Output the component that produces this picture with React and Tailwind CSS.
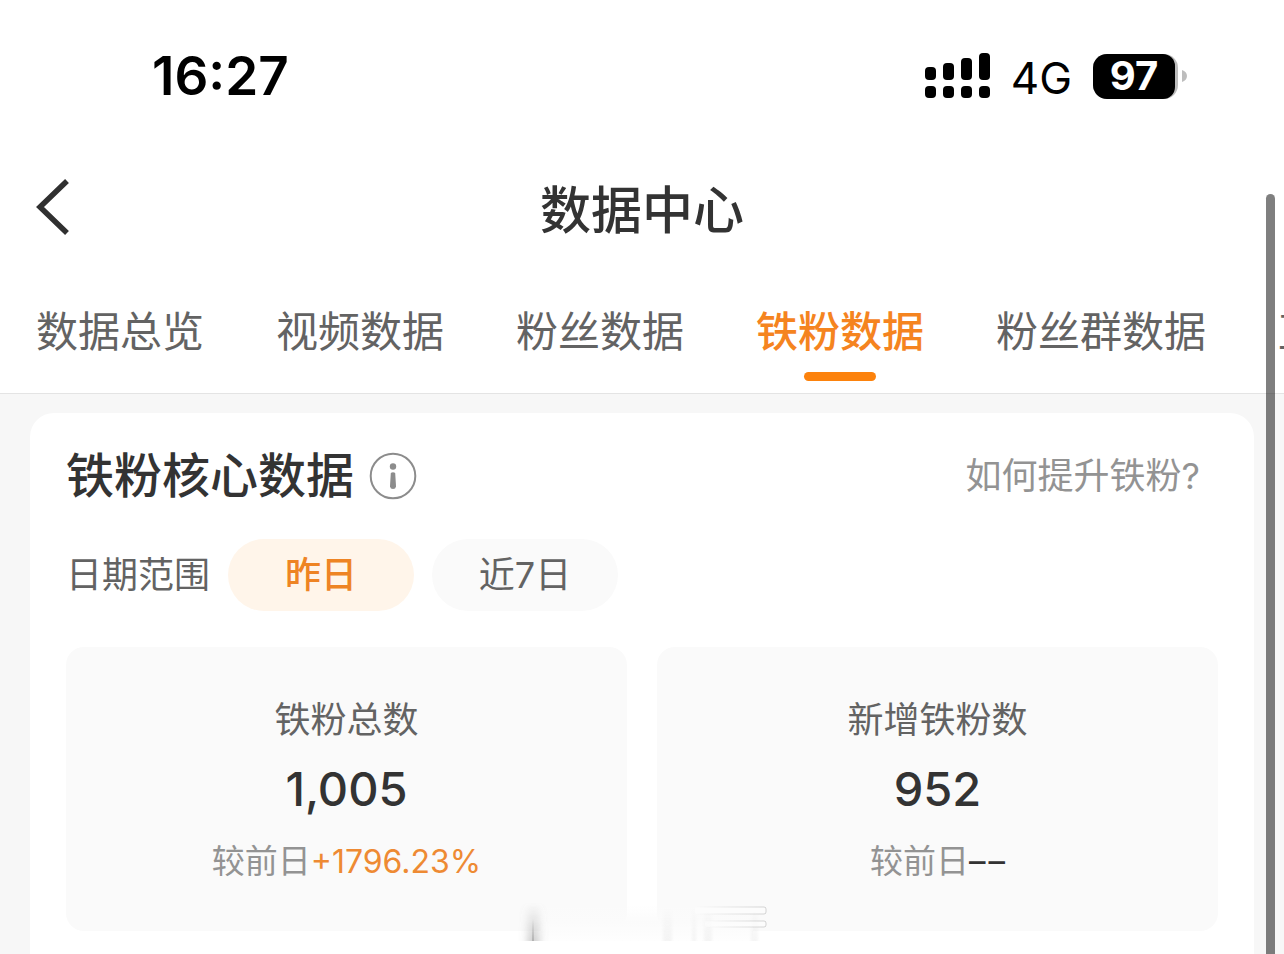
import React from "react";

const tabs = ["数据总览", "视频数据", "粉丝数据", "铁粉数据", "粉丝群数据", "直播数据"];
const activeTab = "铁粉数据";

function SignalIcon() {
  return (
    <svg width="66" height="46" viewBox="0 0 66 46" className="shrink-0" aria-hidden="true">
      <rect x="0" y="14" width="11" height="13" rx="4" />
      <rect x="18" y="10" width="11" height="17" rx="4" />
      <rect x="36" y="5" width="11" height="22" rx="4" />
      <rect x="54" y="0" width="11" height="27" rx="4" />
      <rect x="0" y="33" width="11" height="12" rx="4" />
      <rect x="18" y="33" width="11" height="12" rx="4" />
      <rect x="36" y="33" width="11" height="12" rx="4" />
      <rect x="54" y="33" width="11" height="12" rx="4" />
    </svg>
  );
}

function StatusBar() {
  return (
    <div className="flex h-[152px] items-center justify-between pr-[96px] pl-[152px] text-black">
      <time className="text-[53px] leading-[64px] font-semibold">16:27</time>
      <div className="flex items-center">
        <SignalIcon />
        <span className="ml-[20px] pt-[4px] text-[44px] leading-[54px]">4G</span>
        <div className="ml-[21px] flex items-center">
          <div className="rounded-[14px] bg-[#bdbdbd] pr-[3px]">
            <div className="flex h-[45px] w-[82px] items-center justify-center rounded-l-[14px] rounded-r-[12px] bg-black text-[40px] leading-[48px] font-bold text-white">
              97
            </div>
          </div>
          <svg width="10" height="14" viewBox="0 0 10 14" aria-hidden="true">
            <path d="M4 1C7 2 9 4 9 7s-2 5-5 6z" fill="#bdbdbd" />
          </svg>
        </div>
      </div>
    </div>
  );
}

function TitleBar() {
  return (
    <header className="grid h-[114px] grid-cols-[1fr_auto_1fr] items-center px-[36px]">
      <button type="button" aria-label="返回" className="justify-self-start pb-[4px]">
        <svg width="34" height="58" viewBox="0 0 34 58" fill="none" stroke="#303030" strokeWidth="5.5" aria-hidden="true">
          <path d="M31 3L4 29l27 26" />
        </svg>
      </button>
      <h1 className="pt-[4px] text-[51px] leading-[60px] font-medium text-[#333333]">数据中心</h1>
    </header>
  );
}

function Tabs() {
  return (
    <nav className="flex h-[128px] gap-[72px] overflow-hidden border-b border-[#e4e4e4] pt-[36px] pl-[36px]">
      {tabs.map((tab) => (
        <button
          key={tab}
          type="button"
          aria-current={tab === activeTab ? "page" : undefined}
          className={
            "flex shrink-0 flex-col items-center gap-[10px] text-[42px] leading-[60px] whitespace-nowrap " +
            (tab === activeTab ? "font-medium text-[#f5841f]" : "text-[#636363]")
          }
        >
          {tab}
          {tab === activeTab && <span className="h-[9px] w-[72px] rounded-full bg-[#fc820c]" />}
        </button>
      ))}
    </nav>
  );
}

function StatCard({ label, value, children }) {
  return (
    <section className="flex flex-col items-center rounded-[18px] bg-[#fafafa] pt-[46px] pb-[45px] text-center">
      <h3 className="text-[36px] leading-[54px] text-[#636363]">{label}</h3>
      <p className="mt-[12px] text-[47px] leading-[60px] font-medium text-[#333333]">{value}</p>
      <p className="mt-[18px] text-[33px] leading-[49px] text-[#939393]">较前日{children}</p>
    </section>
  );
}

function Smudge() {
  return (
    <svg
      width="260"
      height="46"
      viewBox="0 0 260 46"
      className="pointer-events-none absolute top-[897px] left-[515px]"
      aria-hidden="true"
    >
      <defs>
        <linearGradient id="fade" x1="0" y1="0" x2="0" y2="1">
          <stop offset="0" stopColor="#888" stopOpacity="0" />
          <stop offset="1" stopColor="#888" stopOpacity="0.45" />
        </linearGradient>
        <linearGradient id="side" x1="0" y1="0" x2="1" y2="0">
          <stop offset="0" stopColor="#aaa" stopOpacity="0" />
          <stop offset="1" stopColor="#aaa" stopOpacity="0.5" />
        </linearGradient>
        <linearGradient id="band" x1="0" y1="0" x2="0" y2="1">
          <stop offset="0" stopColor="#fbfbfb" stopOpacity="0" />
          <stop offset="0.5" stopColor="#fbfbfb" />
          <stop offset="1" stopColor="#fefefe" />
        </linearGradient>
        <filter id="soft" x="-200%" y="-10%" width="500%" height="120%">
          <feGaussianBlur stdDeviation="4 0" />
        </filter>
        <filter id="haze" x="-50%" y="-10%" width="200%" height="120%">
          <feGaussianBlur stdDeviation="1.5 0" />
        </filter>
      </defs>
      <rect x="26" y="8" width="212" height="36" fill="url(#band)" />
      <rect x="13" y="6" width="11" height="38" fill="url(#fade)" filter="url(#soft)" />
      <rect x="17" y="22" width="2" height="22" fill="url(#fade)" />
      <g fill="url(#fade)" opacity="0.18" filter="url(#haze)">
        <rect x="148" y="10" width="9" height="34" />
        <rect x="177" y="10" width="4" height="34" />
        <rect x="189" y="10" width="8" height="34" />
        <rect x="236" y="10" width="7" height="34" />
      </g>
      <g fill="#fdfdfd" fillOpacity="0.6" stroke="url(#side)" strokeWidth="1">
        <rect x="180" y="10" width="71" height="7" rx="2" />
        <rect x="190" y="24" width="61" height="6" rx="2" />
      </g>
    </svg>
  );
}

export default function App() {
  return (
    <div className="relative flex h-screen flex-col overflow-hidden bg-[#f7f7f7] font-['Inter','Noto_Sans_CJK_SC',sans-serif]">
      <div className="shrink-0 bg-white">
        <StatusBar />
        <TitleBar />
        <Tabs />
      </div>

      <main className="mx-[30px] mt-[19px] flex-1 rounded-t-[24px] bg-white px-[36px] pt-[33px]">
        <div className="flex items-center justify-between">
          <div className="flex items-center gap-[15px]">
            <h2 className="text-[48px] leading-[60px] font-medium text-[#333333]">铁粉核心数据</h2>
            <button type="button" aria-label="说明">
              <svg width="48" height="48" viewBox="0 0 48 48" aria-hidden="true">
                <circle cx="24" cy="24" r="22.3" fill="none" stroke="#8c8c8c" strokeWidth="2" />
                <circle cx="24" cy="14.5" r="3.2" fill="#8c8c8c" />
                <path d="M21.8 21q2.2-1.6 4.4 0l.8 13.5q-.4 2.5-3 2.5t-3-2.5z" fill="#8c8c8c" />
              </svg>
            </button>
          </div>
          <a href="#guide" className="mr-[18px] text-[36px] leading-[54px] text-[#939393]">
            如何提升铁粉?
          </a>
        </div>

        <div className="mt-[33px] flex items-center gap-[18px] text-[36px] leading-[54px] text-[#636363]">
          <span>日期范围</span>
          <button type="button" aria-pressed="true" className="h-[72px] w-[186px] rounded-full bg-[#fff5ea] font-medium text-[#ee8424]">
            昨日
          </button>
          <button type="button" aria-pressed="false" className="h-[72px] w-[186px] rounded-full bg-[#fafafa]">
            近7日
          </button>
        </div>

        <div className="mt-[36px] grid grid-cols-2 gap-[30px]">
          <StatCard label="铁粉总数" value="1,005">
            <span className="text-[32px] text-[#ee8a33]">+1796.23%</span>
          </StatCard>
          <StatCard label="新增铁粉数" value="952">
            <span className="inline-flex gap-[3px] text-[#333333]">
              <span>–</span>
              <span>–</span>
            </span>
          </StatCard>
        </div>
      </main>

      <Smudge />
      <div className="absolute top-[194px] right-[9px] bottom-0 w-[9px] rounded-t-full bg-black/50" />
    </div>
  );
}
